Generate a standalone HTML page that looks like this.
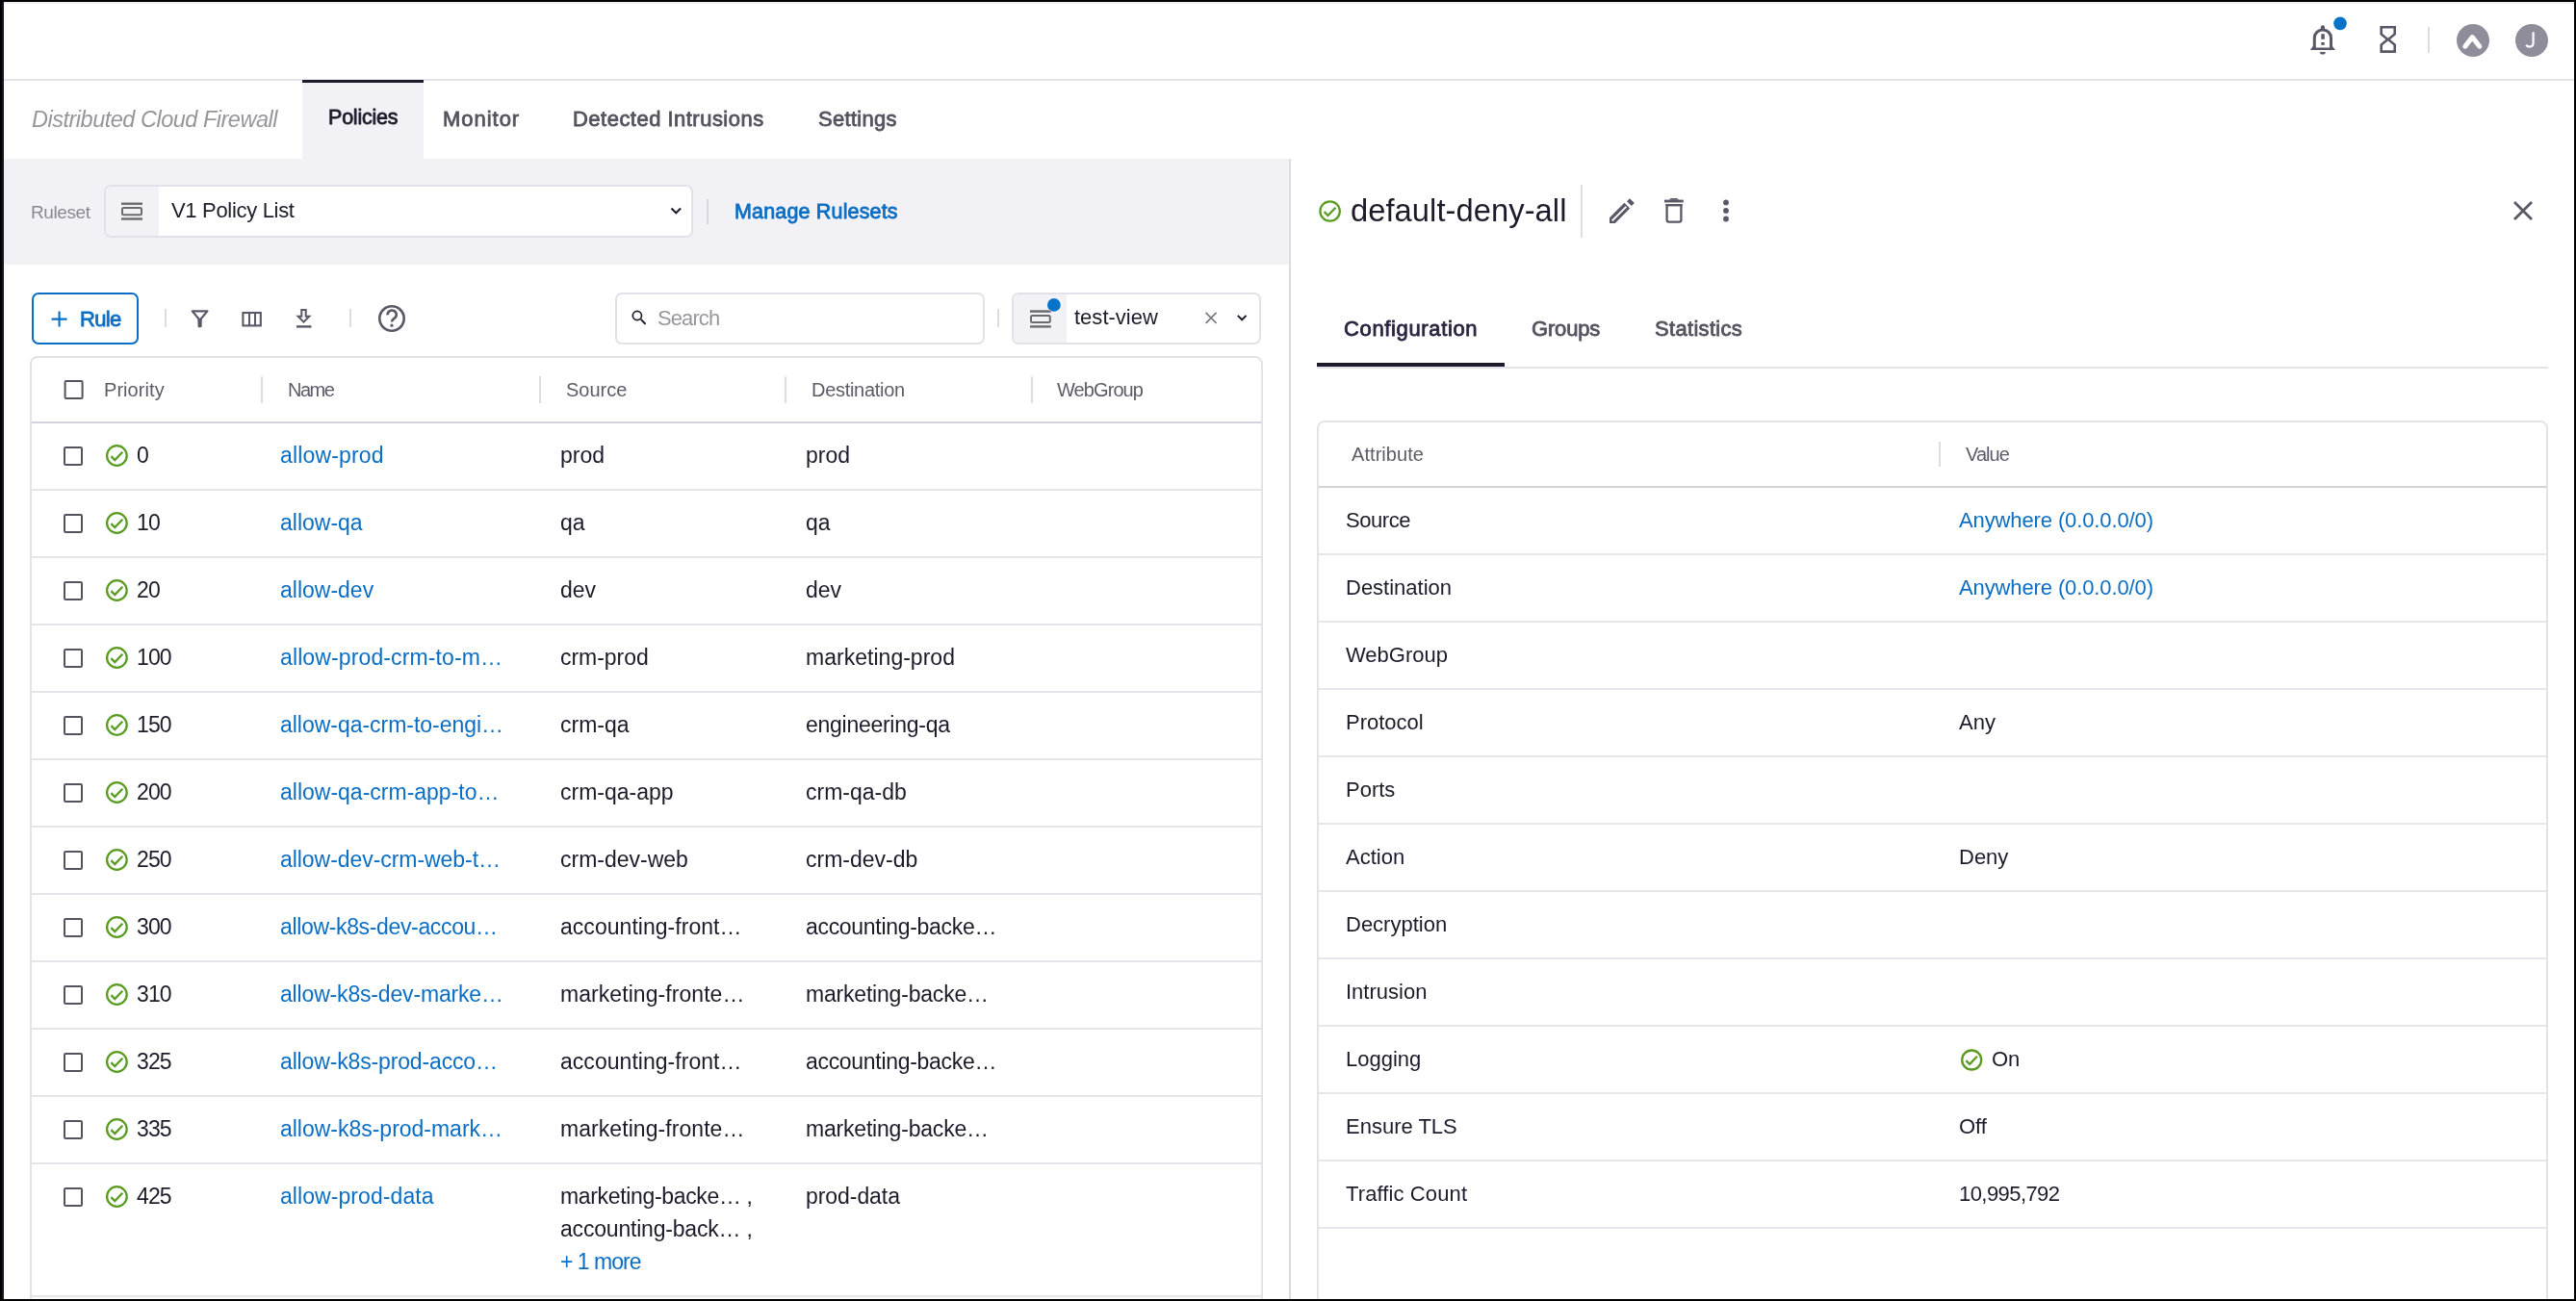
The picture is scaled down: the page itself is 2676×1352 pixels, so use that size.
<!DOCTYPE html>
<html><head><meta charset="utf-8"><style>
html,body{margin:0;padding:0;width:2676px;height:1352px;overflow:hidden;background:#000;}
body{position:relative;font-family:"Liberation Sans",sans-serif;}
.b{position:absolute;}
.t{position:absolute;white-space:nowrap;will-change:transform;}
svg{position:absolute;left:0;top:0;}
</style></head><body>
<div class="b" style="left:0px;top:0px;width:2676px;height:1352px;background:#000;"></div>
<div class="b" style="left:2px;top:2px;width:2px;height:1348px;background:#1a1628;"></div>
<div class="b" style="left:4px;top:2px;width:2670px;height:1348px;background:#fff;"></div>
<div class="b" style="left:4px;top:2px;width:2670px;height:2px;background:#f0eff2;"></div>
<div class="b" style="left:4px;top:82px;width:2670px;height:2px;background:#e4e3e9;"></div>
<div class="b" style="left:2522px;top:28px;width:2px;height:27px;background:#dddce2;"></div>
<div class="t" style="left:33.00px;top:112.61px;font-size:23.5px;line-height:23.5px;color:#96959b;font-style:italic;letter-spacing:-0.492px;">Distributed Cloud Firewall</div>
<div class="b" style="left:314px;top:83px;width:126px;height:82px;background:#f2f1f6;"></div>
<div class="b" style="left:314px;top:83px;width:126px;height:3px;background:#1e1b2d;"></div>
<div class="t" style="left:341.00px;top:111.60px;font-size:21.5px;line-height:21.5px;color:#1d1b2a;-webkit-text-stroke:0.8px #1d1b2a;letter-spacing:-0.214px;">Policies</div>
<div class="t" style="left:460.40px;top:113.18px;font-size:22px;line-height:22px;color:#55535f;-webkit-text-stroke:0.8px #55535f;letter-spacing:0.967px;">Monitor</div>
<div class="t" style="left:595.40px;top:113.18px;font-size:22px;line-height:22px;color:#55535f;-webkit-text-stroke:0.8px #55535f;letter-spacing:0.478px;">Detected Intrusions</div>
<div class="t" style="left:850.00px;top:113.18px;font-size:22px;line-height:22px;color:#55535f;-webkit-text-stroke:0.8px #55535f;letter-spacing:0.300px;">Settings</div>
<div class="b" style="left:4px;top:165px;width:1336px;height:110px;background:#f2f1f6;"></div>
<div class="t" style="left:32.00px;top:210.92px;font-size:19px;line-height:19px;color:#8a8893;letter-spacing:-0.400px;">Ruleset</div>
<div class="b" style="left:108px;top:192px;width:612px;height:55px;background:#fff;border:2px solid #e2e1e7;border-radius:7px;box-sizing:border-box;"></div>
<div class="b" style="left:110px;top:194px;width:55px;height:51px;background:#f2f1f6;border-radius:5px 0 0 5px;"></div>
<div class="t" style="left:177.60px;top:208.38px;font-size:22px;line-height:22px;color:#1d1b2a;letter-spacing:-0.315px;">V1 Policy List</div>
<div class="b" style="left:734px;top:207px;width:2px;height:26px;background:#d9d8de;"></div>
<div class="t" style="left:763.40px;top:209.60px;font-size:21.5px;line-height:21.5px;color:#0b6ec5;-webkit-text-stroke:0.8px #0b6ec5;letter-spacing:0.164px;">Manage Rulesets</div>
<div class="b" style="left:1339px;top:165px;width:2px;height:1185px;background:#dcdbe0;"></div>
<div class="b" style="left:33px;top:304px;width:111px;height:54px;border:2px solid #0b6ec5;border-radius:7px;box-sizing:border-box;"></div>
<div class="t" style="left:83.40px;top:320.58px;font-size:22px;line-height:22px;color:#0b6ec5;-webkit-text-stroke:0.8px #0b6ec5;letter-spacing:-0.667px;">Rule</div>
<div class="b" style="left:171px;top:321px;width:2px;height:19px;background:#dddce2;"></div>
<div class="b" style="left:363px;top:321px;width:2px;height:19px;background:#dddce2;"></div>
<div class="b" style="left:639px;top:304px;width:384px;height:54px;background:#fff;border:2px solid #e2e1e7;border-radius:7px;box-sizing:border-box;"></div>
<div class="t" style="left:683.00px;top:320.38px;font-size:22px;line-height:22px;color:#98979e;letter-spacing:-0.900px;">Search</div>
<div class="b" style="left:1036px;top:321px;width:2px;height:19px;background:#dddce2;"></div>
<div class="b" style="left:1051px;top:304px;width:259px;height:54px;background:#fff;border:2px solid #e2e1e7;border-radius:7px;box-sizing:border-box;"></div>
<div class="b" style="left:1053px;top:306px;width:55px;height:50px;background:#f2f1f6;border-radius:5px 0 0 5px;"></div>
<div class="t" style="left:1116.00px;top:318.98px;font-size:22px;line-height:22px;color:#1d1b2a;letter-spacing:0.012px;">test-view</div>
<div class="b" style="left:31px;top:370px;width:1281px;height:1100px;border:2px solid #e3e2e8;border-radius:8px;box-sizing:border-box;"></div>
<div class="b" style="left:33px;top:438px;width:1277px;height:2px;background:#d3d2d9;"></div>
<div class="b" style="left:271px;top:391px;width:2px;height:28px;background:#dddce2;"></div>
<div class="b" style="left:560px;top:391px;width:2px;height:28px;background:#dddce2;"></div>
<div class="b" style="left:815px;top:391px;width:2px;height:28px;background:#dddce2;"></div>
<div class="b" style="left:1071px;top:391px;width:2px;height:28px;background:#dddce2;"></div>
<div class="t" style="left:108.00px;top:395.07px;font-size:20px;line-height:20px;color:#5d5b68;letter-spacing:0.057px;">Priority</div>
<div class="t" style="left:299.00px;top:395.07px;font-size:20px;line-height:20px;color:#5d5b68;letter-spacing:-1.533px;">Name</div>
<div class="t" style="left:588.00px;top:395.07px;font-size:20px;line-height:20px;color:#5d5b68;">Source</div>
<div class="t" style="left:843.40px;top:395.07px;font-size:20px;line-height:20px;color:#5d5b68;letter-spacing:-0.290px;">Destination</div>
<div class="t" style="left:1098.00px;top:395.07px;font-size:20px;line-height:20px;color:#5d5b68;letter-spacing:-0.914px;">WebGroup</div>
<div class="b" style="left:33px;top:508px;width:1277px;height:2px;background:#e6e5ea;"></div>
<div class="t" style="left:142.00px;top:461.53px;font-size:23px;line-height:23px;color:#1d1b2a;letter-spacing:-0.900px;">0</div>
<div class="t" style="left:291.00px;top:461.53px;font-size:23px;line-height:23px;color:#0b6ec5;letter-spacing:0.167px;">allow-prod</div>
<div class="t" style="left:582.00px;top:461.53px;font-size:23px;line-height:23px;color:#1d1b2a;">prod</div>
<div class="t" style="left:837.00px;top:461.53px;font-size:23px;line-height:23px;color:#1d1b2a;">prod</div>
<div class="b" style="left:33px;top:578px;width:1277px;height:2px;background:#e6e5ea;"></div>
<div class="t" style="left:142.00px;top:531.53px;font-size:23px;line-height:23px;color:#1d1b2a;letter-spacing:-0.900px;">10</div>
<div class="t" style="left:291.00px;top:531.53px;font-size:23px;line-height:23px;color:#0b6ec5;">allow-qa</div>
<div class="t" style="left:582.00px;top:531.53px;font-size:23px;line-height:23px;color:#1d1b2a;">qa</div>
<div class="t" style="left:837.00px;top:531.53px;font-size:23px;line-height:23px;color:#1d1b2a;">qa</div>
<div class="b" style="left:33px;top:648px;width:1277px;height:2px;background:#e6e5ea;"></div>
<div class="t" style="left:142.00px;top:601.53px;font-size:23px;line-height:23px;color:#1d1b2a;letter-spacing:-0.900px;">20</div>
<div class="t" style="left:291.00px;top:601.53px;font-size:23px;line-height:23px;color:#0b6ec5;">allow-dev</div>
<div class="t" style="left:582.00px;top:601.53px;font-size:23px;line-height:23px;color:#1d1b2a;">dev</div>
<div class="t" style="left:837.00px;top:601.53px;font-size:23px;line-height:23px;color:#1d1b2a;">dev</div>
<div class="b" style="left:33px;top:718px;width:1277px;height:2px;background:#e6e5ea;"></div>
<div class="t" style="left:142.00px;top:671.53px;font-size:23px;line-height:23px;color:#1d1b2a;letter-spacing:-0.900px;">100</div>
<div class="t" style="left:291.00px;top:671.53px;font-size:23px;line-height:23px;color:#0b6ec5;letter-spacing:0.121px;">allow-prod-crm-to-m…</div>
<div class="t" style="left:582.00px;top:671.53px;font-size:23px;line-height:23px;color:#1d1b2a;letter-spacing:-0.043px;">crm-prod</div>
<div class="t" style="left:837.00px;top:671.53px;font-size:23px;line-height:23px;color:#1d1b2a;letter-spacing:0.023px;">marketing-prod</div>
<div class="b" style="left:33px;top:788px;width:1277px;height:2px;background:#e6e5ea;"></div>
<div class="t" style="left:142.00px;top:741.53px;font-size:23px;line-height:23px;color:#1d1b2a;letter-spacing:-0.900px;">150</div>
<div class="t" style="left:291.00px;top:741.53px;font-size:23px;line-height:23px;color:#0b6ec5;letter-spacing:-0.030px;">allow-qa-crm-to-engi…</div>
<div class="t" style="left:582.00px;top:741.53px;font-size:23px;line-height:23px;color:#1d1b2a;">crm-qa</div>
<div class="t" style="left:837.00px;top:741.53px;font-size:23px;line-height:23px;color:#1d1b2a;letter-spacing:-0.269px;">engineering-qa</div>
<div class="b" style="left:33px;top:858px;width:1277px;height:2px;background:#e6e5ea;"></div>
<div class="t" style="left:142.00px;top:811.53px;font-size:23px;line-height:23px;color:#1d1b2a;letter-spacing:-0.900px;">200</div>
<div class="t" style="left:291.00px;top:811.53px;font-size:23px;line-height:23px;color:#0b6ec5;">allow-qa-crm-app-to…</div>
<div class="t" style="left:582.00px;top:811.53px;font-size:23px;line-height:23px;color:#1d1b2a;">crm-qa-app</div>
<div class="t" style="left:837.00px;top:811.53px;font-size:23px;line-height:23px;color:#1d1b2a;">crm-qa-db</div>
<div class="b" style="left:33px;top:928px;width:1277px;height:2px;background:#e6e5ea;"></div>
<div class="t" style="left:142.00px;top:881.53px;font-size:23px;line-height:23px;color:#1d1b2a;letter-spacing:-0.900px;">250</div>
<div class="t" style="left:291.00px;top:881.53px;font-size:23px;line-height:23px;color:#0b6ec5;letter-spacing:-0.053px;">allow-dev-crm-web-t…</div>
<div class="t" style="left:582.00px;top:881.53px;font-size:23px;line-height:23px;color:#1d1b2a;">crm-dev-web</div>
<div class="t" style="left:837.00px;top:881.53px;font-size:23px;line-height:23px;color:#1d1b2a;">crm-dev-db</div>
<div class="b" style="left:33px;top:998px;width:1277px;height:2px;background:#e6e5ea;"></div>
<div class="t" style="left:142.00px;top:951.53px;font-size:23px;line-height:23px;color:#1d1b2a;letter-spacing:-0.900px;">300</div>
<div class="t" style="left:291.00px;top:951.53px;font-size:23px;line-height:23px;color:#0b6ec5;letter-spacing:-0.347px;">allow-k8s-dev-accou…</div>
<div class="t" style="left:582.00px;top:951.53px;font-size:23px;line-height:23px;color:#1d1b2a;letter-spacing:0.037px;">accounting-front…</div>
<div class="t" style="left:837.00px;top:951.53px;font-size:23px;line-height:23px;color:#1d1b2a;letter-spacing:-0.306px;">accounting-backe…</div>
<div class="b" style="left:33px;top:1068px;width:1277px;height:2px;background:#e6e5ea;"></div>
<div class="t" style="left:142.00px;top:1021.53px;font-size:23px;line-height:23px;color:#1d1b2a;letter-spacing:-0.900px;">310</div>
<div class="t" style="left:291.00px;top:1021.53px;font-size:23px;line-height:23px;color:#0b6ec5;letter-spacing:-0.168px;">allow-k8s-dev-marke…</div>
<div class="t" style="left:582.00px;top:1021.53px;font-size:23px;line-height:23px;color:#1d1b2a;letter-spacing:0.062px;">marketing-fronte…</div>
<div class="t" style="left:837.00px;top:1021.53px;font-size:23px;line-height:23px;color:#1d1b2a;letter-spacing:-0.200px;">marketing-backe…</div>
<div class="b" style="left:33px;top:1138px;width:1277px;height:2px;background:#e6e5ea;"></div>
<div class="t" style="left:142.00px;top:1091.53px;font-size:23px;line-height:23px;color:#1d1b2a;letter-spacing:-0.900px;">325</div>
<div class="t" style="left:291.00px;top:1091.53px;font-size:23px;line-height:23px;color:#0b6ec5;letter-spacing:-0.147px;">allow-k8s-prod-acco…</div>
<div class="t" style="left:582.00px;top:1091.53px;font-size:23px;line-height:23px;color:#1d1b2a;letter-spacing:0.037px;">accounting-front…</div>
<div class="t" style="left:837.00px;top:1091.53px;font-size:23px;line-height:23px;color:#1d1b2a;letter-spacing:-0.306px;">accounting-backe…</div>
<div class="b" style="left:33px;top:1208px;width:1277px;height:2px;background:#e6e5ea;"></div>
<div class="t" style="left:142.00px;top:1161.53px;font-size:23px;line-height:23px;color:#1d1b2a;letter-spacing:-0.900px;">335</div>
<div class="t" style="left:291.00px;top:1161.53px;font-size:23px;line-height:23px;color:#0b6ec5;letter-spacing:-0.016px;">allow-k8s-prod-mark…</div>
<div class="t" style="left:582.00px;top:1161.53px;font-size:23px;line-height:23px;color:#1d1b2a;letter-spacing:0.062px;">marketing-fronte…</div>
<div class="t" style="left:837.00px;top:1161.53px;font-size:23px;line-height:23px;color:#1d1b2a;letter-spacing:-0.200px;">marketing-backe…</div>
<div class="t" style="left:142.00px;top:1231.53px;font-size:23px;line-height:23px;color:#1d1b2a;letter-spacing:-0.900px;">425</div>
<div class="t" style="left:291.00px;top:1231.53px;font-size:23px;line-height:23px;color:#0b6ec5;letter-spacing:0.071px;">allow-prod-data</div>
<div class="t" style="left:582.00px;top:1231.53px;font-size:23px;line-height:23px;color:#1d1b2a;letter-spacing:-0.341px;">marketing-backe… ,</div>
<div class="t" style="left:837.00px;top:1231.53px;font-size:23px;line-height:23px;color:#1d1b2a;letter-spacing:-0.062px;">prod-data</div>
<div class="t" style="left:582.00px;top:1265.53px;font-size:23px;line-height:23px;color:#1d1b2a;letter-spacing:-0.194px;">accounting-back… ,</div>
<div class="t" style="left:582.00px;top:1299.53px;font-size:23px;line-height:23px;color:#0b6ec5;letter-spacing:-0.986px;">+ 1 more</div>
<div class="b" style="left:33px;top:1346px;width:1277px;height:2px;background:#e6e5ea;"></div>
<div class="t" style="left:1403.40px;top:203.32px;font-size:32.7px;line-height:32.7px;color:#1d1b2a;letter-spacing:0.060px;">default-deny-all</div>
<div class="b" style="left:1642px;top:192px;width:2px;height:55px;background:#e0dfe6;"></div>
<div class="t" style="left:1396.00px;top:331.18px;font-size:22px;line-height:22px;color:#2a2440;-webkit-text-stroke:0.8px #2a2440;letter-spacing:0.642px;">Configuration</div>
<div class="t" style="left:1591.40px;top:331.18px;font-size:22px;line-height:22px;color:#55535f;-webkit-text-stroke:0.8px #55535f;letter-spacing:-0.180px;">Groups</div>
<div class="t" style="left:1719.40px;top:331.18px;font-size:22px;line-height:22px;color:#55535f;-webkit-text-stroke:0.8px #55535f;letter-spacing:0.311px;">Statistics</div>
<div class="b" style="left:1368px;top:381px;width:1279px;height:2px;background:#e4e3e9;"></div>
<div class="b" style="left:1368px;top:377px;width:195px;height:4px;background:#1e1b2d;"></div>
<div class="b" style="left:1368px;top:437px;width:1279px;height:1000px;border:2px solid #e3e2e8;border-radius:8px;box-sizing:border-box;"></div>
<div class="t" style="left:1403.60px;top:462.07px;font-size:20px;line-height:20px;color:#5d5b68;letter-spacing:0.062px;">Attribute</div>
<div class="t" style="left:2041.60px;top:462.07px;font-size:20px;line-height:20px;color:#5d5b68;letter-spacing:-0.975px;">Value</div>
<div class="b" style="left:2013.5px;top:459px;width:2px;height:26px;background:#dddce2;"></div>
<div class="b" style="left:1370px;top:505px;width:1275px;height:2px;background:#d3d2d9;"></div>
<div class="b" style="left:1370px;top:575px;width:1275px;height:2px;background:#e6e5ea;"></div>
<div class="t" style="left:1397.50px;top:529.88px;font-size:22px;line-height:22px;color:#1d1b2a;letter-spacing:-0.440px;">Source</div>
<div class="t" style="left:2034.60px;top:529.88px;font-size:22px;line-height:22px;color:#0b6ec5;letter-spacing:-0.116px;">Anywhere (0.0.0.0/0)</div>
<div class="b" style="left:1370px;top:645px;width:1275px;height:2px;background:#e6e5ea;"></div>
<div class="t" style="left:1397.50px;top:599.88px;font-size:22px;line-height:22px;color:#1d1b2a;">Destination</div>
<div class="t" style="left:2034.60px;top:599.88px;font-size:22px;line-height:22px;color:#0b6ec5;letter-spacing:-0.116px;">Anywhere (0.0.0.0/0)</div>
<div class="b" style="left:1370px;top:715px;width:1275px;height:2px;background:#e6e5ea;"></div>
<div class="t" style="left:1397.50px;top:669.88px;font-size:22px;line-height:22px;color:#1d1b2a;">WebGroup</div>
<div class="b" style="left:1370px;top:785px;width:1275px;height:2px;background:#e6e5ea;"></div>
<div class="t" style="left:1397.50px;top:739.88px;font-size:22px;line-height:22px;color:#1d1b2a;">Protocol</div>
<div class="t" style="left:2034.60px;top:739.88px;font-size:22px;line-height:22px;color:#1d1b2a;">Any</div>
<div class="b" style="left:1370px;top:855px;width:1275px;height:2px;background:#e6e5ea;"></div>
<div class="t" style="left:1397.50px;top:809.88px;font-size:22px;line-height:22px;color:#1d1b2a;">Ports</div>
<div class="b" style="left:1370px;top:925px;width:1275px;height:2px;background:#e6e5ea;"></div>
<div class="t" style="left:1397.50px;top:879.88px;font-size:22px;line-height:22px;color:#1d1b2a;">Action</div>
<div class="t" style="left:2034.60px;top:879.88px;font-size:22px;line-height:22px;color:#1d1b2a;">Deny</div>
<div class="b" style="left:1370px;top:995px;width:1275px;height:2px;background:#e6e5ea;"></div>
<div class="t" style="left:1397.50px;top:949.88px;font-size:22px;line-height:22px;color:#1d1b2a;">Decryption</div>
<div class="b" style="left:1370px;top:1065px;width:1275px;height:2px;background:#e6e5ea;"></div>
<div class="t" style="left:1397.50px;top:1019.88px;font-size:22px;line-height:22px;color:#1d1b2a;">Intrusion</div>
<div class="b" style="left:1370px;top:1135px;width:1275px;height:2px;background:#e6e5ea;"></div>
<div class="t" style="left:1397.50px;top:1089.88px;font-size:22px;line-height:22px;color:#1d1b2a;">Logging</div>
<div class="t" style="left:2069.00px;top:1089.88px;font-size:22px;line-height:22px;color:#1d1b2a;">On</div>
<div class="b" style="left:1370px;top:1205px;width:1275px;height:2px;background:#e6e5ea;"></div>
<div class="t" style="left:1397.50px;top:1159.88px;font-size:22px;line-height:22px;color:#1d1b2a;">Ensure TLS</div>
<div class="t" style="left:2034.60px;top:1159.88px;font-size:22px;line-height:22px;color:#1d1b2a;">Off</div>
<div class="b" style="left:1370px;top:1275px;width:1275px;height:2px;background:#e6e5ea;"></div>
<div class="t" style="left:1397.50px;top:1229.88px;font-size:22px;line-height:22px;color:#1d1b2a;letter-spacing:0.108px;">Traffic Count</div>
<div class="t" style="left:2034.60px;top:1229.88px;font-size:22px;line-height:22px;color:#1d1b2a;letter-spacing:-0.567px;">10,995,792</div>
<svg width="2676" height="1352" viewBox="0 0 2676 1352">
<path d="M2404.3 48.5 V39.5 A8.6 8.6 0 0 1 2421.5 39.5 V48.5" fill="none" stroke="#5a5866" stroke-width="3"/>
<path d="M2399.8 52.1 L2402.8 48 H2405.8 V49.6 H2420 V48 H2422.9 L2426 52.1 Z" fill="#5a5866"/>
<rect x="2410.9" y="26.2" width="4.1" height="5" rx="2" fill="#5a5866"/>
<path d="M2410 54 H2415.8 A2.9 2.6 0 0 1 2410 54 Z" fill="#5a5866"/>
<rect x="2411.3" y="35.3" width="3.5" height="5.5" fill="#5a5866"/>
<rect x="2411.3" y="44" width="3.5" height="2.8" fill="#5a5866"/>
<circle cx="2431" cy="24.4" r="6.8" fill="#0673c9"/>
<path d="M2473.7 28.3 H2487.7 V35.5 L2481 41 L2487.7 46.5 V53.6 H2473.7 V46.5 L2480.4 41 L2473.7 35.5 Z" fill="none" stroke="#5a5866" stroke-width="2.6" stroke-linejoin="miter"/>
<circle cx="2569" cy="42" r="17" fill="#8e8d99"/>
<path d="M2560.8 48.2 L2568.3 38.6 L2575.8 48.2" fill="none" stroke="#fff" stroke-width="5" stroke-linecap="round" stroke-linejoin="round"/>
<circle cx="2630" cy="42" r="17" fill="#8e8d99"/>
<path d="M2631.6 33.2 V44.6 Q2631.6 48.6 2627.8 48.6 Q2625.4 48.6 2624.2 46.6" fill="none" stroke="#fff" stroke-width="2.2"/>
<rect x="126" y="210.5" width="22" height="2.4" fill="#6b6a6f"/>
<rect x="127" y="216" width="20" height="7.2" rx="1.5" fill="none" stroke="#6b6a6f" stroke-width="2"/>
<rect x="126" y="226.3" width="22" height="2.4" fill="#6b6a6f"/>
<path d="M697.5 216.5 L702.3 221.3 L707.1 216.5" fill="none" stroke="#1d1b2a" stroke-width="2"/>
<path d="M53.6 331.6 H69.6 M61.6 323.6 V339.6" stroke="#0b6ec5" stroke-width="2.1"/>
<path d="M199.8 323.4 H215.4 L207.6 332.8 Z" fill="none" stroke="#5a5866" stroke-width="2.2" stroke-linejoin="round"/>
<path d="M205.4 331.5 H209.8 L209.6 339.5 Q207.6 341.3 205.6 339.5 Z" fill="#5a5866"/>
<rect x="252.4" y="325" width="18.4" height="13.4" fill="none" stroke="#5a5866" stroke-width="2.1"/>
<rect x="258" y="325" width="2" height="13.4" fill="#5a5866"/><rect x="264" y="325" width="2" height="13.4" fill="#5a5866"/>
<path d="M313.3 322 H317.7 V328.8 H321.3 L315.5 334.6 L309.7 328.8 H313.3 Z" fill="none" stroke="#5a5866" stroke-width="2"/>
<rect x="308" y="338.2" width="15.5" height="2.4" fill="#5a5866"/>
<circle cx="407" cy="331" r="12.7" fill="none" stroke="#5a5866" stroke-width="2.6"/>
<path d="M402.6 327.3 A4.6 4.4 0 1 1 409.8 330.6 Q407 332.6 407 334.5" fill="none" stroke="#5a5866" stroke-width="2.6"/>
<circle cx="407" cy="338.2" r="1.6" fill="#5a5866"/>
<circle cx="661.9" cy="328" r="4.6" fill="none" stroke="#1d1b2a" stroke-width="1.7"/><path d="M666.3 332.4 L670 336.2" stroke="#1d1b2a" stroke-width="2" stroke-linecap="round"/>
<rect x="1070" y="322.3" width="21.8" height="2.5" fill="#6b6a6f"/>
<rect x="1071" y="328" width="19.8" height="7" rx="1.5" fill="none" stroke="#6b6a6f" stroke-width="2"/>
<rect x="1070" y="338.2" width="21.8" height="2.4" fill="#6b6a6f"/>
<circle cx="1094.9" cy="316.9" r="7.6" fill="#fff" opacity="0.6"/><circle cx="1094.9" cy="316.9" r="6.9" fill="#0673c9"/>
<path d="M1252.6 324.8 L1263.6 335.8 M1263.6 324.8 L1252.6 335.8" stroke="#7d7c86" stroke-width="1.7"/>
<path d="M1285.8 327.9 L1290.2 332.3 L1294.6 327.9" fill="none" stroke="#1d1b2a" stroke-width="2"/>
<rect x="67.6" y="396" width="18" height="18" rx="1.2" fill="none" stroke="#55535f" stroke-width="2"/>
<rect x="67" y="465" width="18" height="18" rx="1.2" fill="none" stroke="#55535f" stroke-width="2"/>
<circle cx="121.4" cy="473.5" r="10.3" fill="none" stroke="#5a9b22" stroke-width="2.3"/>
<path d="M115.40 474.10 L119.30 478.00 L127.30 469.70" fill="none" stroke="#5a9b22" stroke-width="2.3"/>
<rect x="67" y="535" width="18" height="18" rx="1.2" fill="none" stroke="#55535f" stroke-width="2"/>
<circle cx="121.4" cy="543.5" r="10.3" fill="none" stroke="#5a9b22" stroke-width="2.3"/>
<path d="M115.40 544.10 L119.30 548.00 L127.30 539.70" fill="none" stroke="#5a9b22" stroke-width="2.3"/>
<rect x="67" y="605" width="18" height="18" rx="1.2" fill="none" stroke="#55535f" stroke-width="2"/>
<circle cx="121.4" cy="613.5" r="10.3" fill="none" stroke="#5a9b22" stroke-width="2.3"/>
<path d="M115.40 614.10 L119.30 618.00 L127.30 609.70" fill="none" stroke="#5a9b22" stroke-width="2.3"/>
<rect x="67" y="675" width="18" height="18" rx="1.2" fill="none" stroke="#55535f" stroke-width="2"/>
<circle cx="121.4" cy="683.5" r="10.3" fill="none" stroke="#5a9b22" stroke-width="2.3"/>
<path d="M115.40 684.10 L119.30 688.00 L127.30 679.70" fill="none" stroke="#5a9b22" stroke-width="2.3"/>
<rect x="67" y="745" width="18" height="18" rx="1.2" fill="none" stroke="#55535f" stroke-width="2"/>
<circle cx="121.4" cy="753.5" r="10.3" fill="none" stroke="#5a9b22" stroke-width="2.3"/>
<path d="M115.40 754.10 L119.30 758.00 L127.30 749.70" fill="none" stroke="#5a9b22" stroke-width="2.3"/>
<rect x="67" y="815" width="18" height="18" rx="1.2" fill="none" stroke="#55535f" stroke-width="2"/>
<circle cx="121.4" cy="823.5" r="10.3" fill="none" stroke="#5a9b22" stroke-width="2.3"/>
<path d="M115.40 824.10 L119.30 828.00 L127.30 819.70" fill="none" stroke="#5a9b22" stroke-width="2.3"/>
<rect x="67" y="885" width="18" height="18" rx="1.2" fill="none" stroke="#55535f" stroke-width="2"/>
<circle cx="121.4" cy="893.5" r="10.3" fill="none" stroke="#5a9b22" stroke-width="2.3"/>
<path d="M115.40 894.10 L119.30 898.00 L127.30 889.70" fill="none" stroke="#5a9b22" stroke-width="2.3"/>
<rect x="67" y="955" width="18" height="18" rx="1.2" fill="none" stroke="#55535f" stroke-width="2"/>
<circle cx="121.4" cy="963.5" r="10.3" fill="none" stroke="#5a9b22" stroke-width="2.3"/>
<path d="M115.40 964.10 L119.30 968.00 L127.30 959.70" fill="none" stroke="#5a9b22" stroke-width="2.3"/>
<rect x="67" y="1025" width="18" height="18" rx="1.2" fill="none" stroke="#55535f" stroke-width="2"/>
<circle cx="121.4" cy="1033.5" r="10.3" fill="none" stroke="#5a9b22" stroke-width="2.3"/>
<path d="M115.40 1034.10 L119.30 1038.00 L127.30 1029.70" fill="none" stroke="#5a9b22" stroke-width="2.3"/>
<rect x="67" y="1095" width="18" height="18" rx="1.2" fill="none" stroke="#55535f" stroke-width="2"/>
<circle cx="121.4" cy="1103.5" r="10.3" fill="none" stroke="#5a9b22" stroke-width="2.3"/>
<path d="M115.40 1104.10 L119.30 1108.00 L127.30 1099.70" fill="none" stroke="#5a9b22" stroke-width="2.3"/>
<rect x="67" y="1165" width="18" height="18" rx="1.2" fill="none" stroke="#55535f" stroke-width="2"/>
<circle cx="121.4" cy="1173.5" r="10.3" fill="none" stroke="#5a9b22" stroke-width="2.3"/>
<path d="M115.40 1174.10 L119.30 1178.00 L127.30 1169.70" fill="none" stroke="#5a9b22" stroke-width="2.3"/>
<rect x="67" y="1235" width="18" height="18" rx="1.2" fill="none" stroke="#55535f" stroke-width="2"/>
<circle cx="121.4" cy="1243.5" r="10.3" fill="none" stroke="#5a9b22" stroke-width="2.3"/>
<path d="M115.40 1244.10 L119.30 1248.00 L127.30 1239.70" fill="none" stroke="#5a9b22" stroke-width="2.3"/>
<circle cx="1381.6" cy="219.5" r="10.2" fill="none" stroke="#5a9b22" stroke-width="2.3"/>
<path d="M1375.66 220.09 L1379.52 223.96 L1387.44 215.74" fill="none" stroke="#5a9b22" stroke-width="2.3"/>
<path d="M1672 232 V226.2 L1687.4 210.8 L1693.2 216.6 L1677.8 232 Z" fill="#5a5866"/>
<path d="M1675 229.2 L1689.3 214.9" stroke="#fff" stroke-width="1.9"/>
<path d="M1674.6 229.6 L1674.6 227.6 L1676.6 229.6 Z" fill="#fff"/>
<path d="M1690 209.3 L1692.9 206.2 L1697.9 210.9 L1694.8 214 Z" fill="#5a5866"/>
<rect x="1729" y="207.6" width="19.8" height="2.8" fill="#5a5866"/><path d="M1734 207.8 L1735.6 206 H1742.4 L1744 207.8 Z" fill="#5a5866"/>
<path d="M1731.6 212 V228.5 Q1731.6 230.6 1733.7 230.6 H1744.3 Q1746.4 230.6 1746.4 228.5 V212" fill="none" stroke="#5a5866" stroke-width="2.3"/>
<path d="M1730.4 213.2 H1747.6" stroke="#5a5866" stroke-width="2.4"/>
<circle cx="1793" cy="210.4" r="2.9" fill="#5a5866"/>
<circle cx="1793" cy="218.9" r="2.9" fill="#5a5866"/>
<circle cx="1793" cy="227.5" r="2.9" fill="#5a5866"/>
<path d="M2612 210 L2630 228 M2630 210 L2612 228" stroke="#5a5866" stroke-width="2.8"/>
<circle cx="2048.2" cy="1101.5" r="10" fill="none" stroke="#5a9b22" stroke-width="2.3"/>
<path d="M2042.37 1102.08 L2046.16 1105.87 L2053.93 1097.81" fill="none" stroke="#5a9b22" stroke-width="2.3"/>
</svg>
<div class="b" style="left:0;top:0;width:2676px;height:2px;background:#000"></div>
<div class="b" style="left:0;top:1350px;width:2676px;height:2px;background:#000"></div>
<div class="b" style="left:0;top:0;width:2px;height:1352px;background:#000"></div>
<div class="b" style="left:2px;top:2px;width:2px;height:1348px;background:#1a1628"></div>
<div class="b" style="left:2674px;top:0;width:2px;height:1352px;background:#000"></div>
</body></html>
